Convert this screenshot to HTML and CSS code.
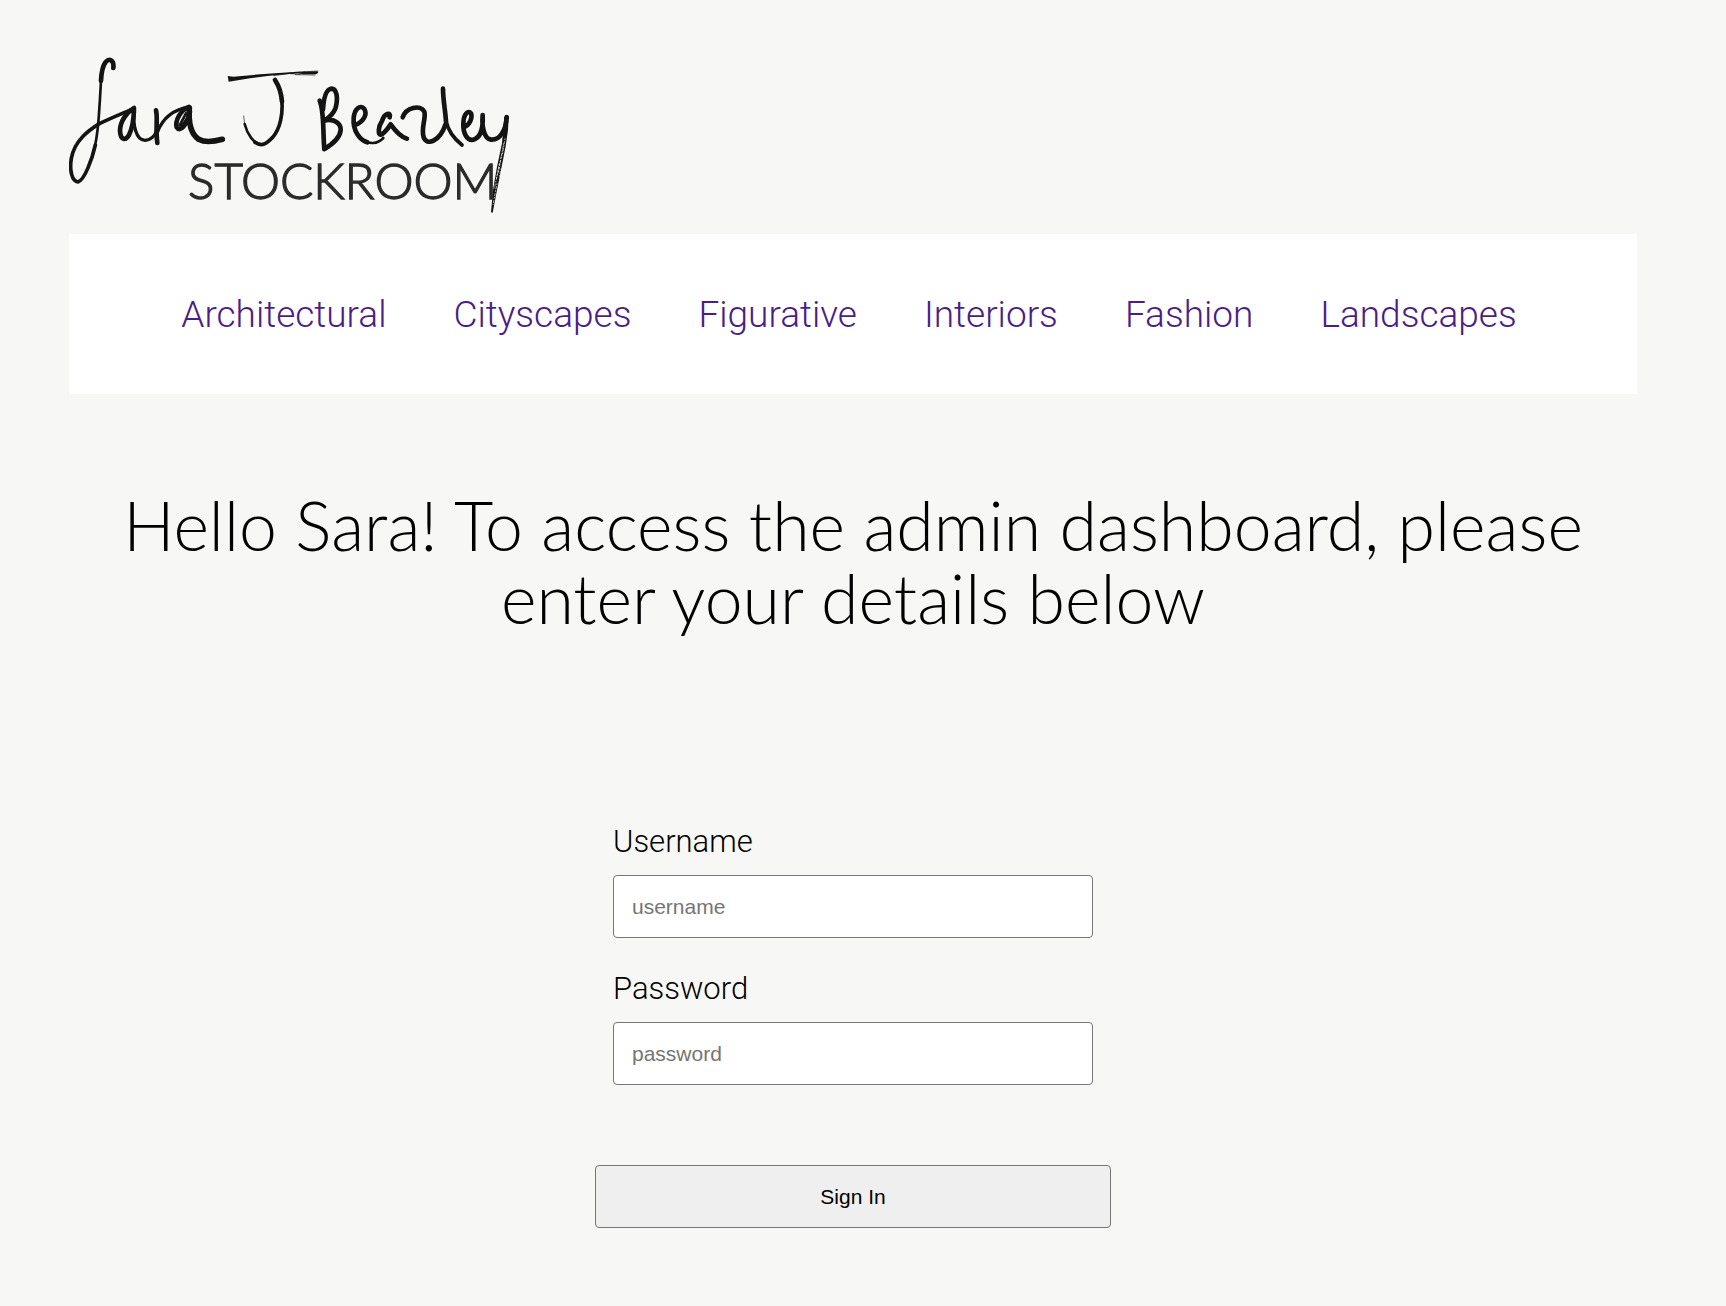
FILE: index.html
```html
<!DOCTYPE html>
<html lang="en">
<head>
<meta charset="utf-8">
<meta name="viewport" content="width=device-width, initial-scale=1">
<title>Sara J Beazley Stockroom</title>
<link rel="stylesheet" href="styles.css">
</head>
<body>
<header class="header">
  <a class="logo" href="#" aria-label="Sara J Beazley Stockroom">
    <svg class="logo-art" viewBox="27 18 1323 474" aria-hidden="true">
      <g class="ink">
        <path class="w11" d="M160 54C163 30 148 24 137 36C126 50 124 70 123 92"/>
        <path class="w6" d="M124 70C122 120 119 160 116 205C113 245 109 280 98 314"/>
        <path class="w9" d="M106 285C96 330 73 390 54 396C36 394 28 362 34 325C44 270 88 240 118 221C150 205 190 189 222 175"/>
        <path class="w11" d="M222 174C202 186 180 212 180 243C182 272 197 272 207 255C217 235 221 210 222 180"/>
        <path class="w8" d="M222 180C218 225 228 271 255 271C275 270 287 255 290 240"/>
        <path class="w11" d="M288 181C294 205 286 232 292 279"/>
        <path class="w8" d="M293 245C306 210 335 180 388 170"/>
        <path class="w11" d="M386 171C360 183 345 212 350 232C360 248 382 225 390 185"/>
        <path class="w6" d="M378 190L359 226M384 200L364 232"/>
        <path class="w14" d="M388 174C385 215 393 252 416 268C436 279 462 275 487 268"/>
        <path class="fill" d="M503 78L520 80L600 73L690 67L722 65L722 69L640 76L570 85L520 93L506 95Z"/>
        <path class="w2" d="M600 77L735 66M640 77L700 69M690 71L720 73M704 67L774 63M706 74L765 75"/>
        <path class="fill" d="M712 70L730 65L772 64L775 68L768 73L730 73Z"/>
        <path class="w12" d="M645 90C655 105 664 130 666 155"/>
        <path class="w9" d="M665 145C670 190 661 235 638 262C620 282 605 291 585 277"/>
        <path class="w6" d="M606 284C580 282 561 250 554 222"/>
        <path class="w2" d="M555 230L551 198"/>
      </g>
      <g class="ink" transform="translate(690 0)">
        <path class="w11" d="M89 152C103 185 98 240 103 297"/>
        <path class="w11" d="M99 178C101 145 108 119 123 116C140 115 145 143 137 173C130 193 118 202 104 211C133 206 153 219 152 240C150 266 125 284 103 297"/>
        <path class="w11" d="M193 226C221 216 233 193 223 177C211 162 193 176 191 205C188 243 210 270 232 277"/>
        <path class="w6" d="M215 266C237 285 263 282 280 264"/>
        <path class="w11" d="M299 202C304 184 283 190 276 213C264 231 264 252 272 254C284 250 294 235 302 223C315 241 331 261 351 266"/>
        <path class="w11" d="M338 202C348 172 391 163 403 185C409 204 392 235 401 262C410 288 449 276 467 222"/>
        <path class="w12" d="M459 116C459 150 466 180 468 215"/>
        <path class="w9" d="M468 213C475 245 492 266 516 285"/>
        <path class="w11" d="M524 231C539 224 548 204 543 190C534 178 520 194 520 222C519 250 532 274 550 269C571 263 580 235 578 195C575 230 582 266 603 269C630 271 648 240 650 201"/>
        <path class="fill" d="M643 200L656 199L654 240L647 289L635 350L620 425L608 488L603 487L609 420L621 350L636 280Z"/>
      </g>
      <g class="grain" transform="translate(690 0)">
        <path d="M641 280L625 370M636 310L613 415M645 265L637 315M628 340L619 390M621 400L609 465M634 355L628 380"/>
      </g>
      <text class="logo-word" x="384" y="446">STOCKROOM</text>
    </svg>
  </a>
</header>
<nav class="nav" aria-label="Categories">
  <a href="#">Architectural</a>
  <a href="#">Cityscapes</a>
  <a href="#">Figurative</a>
  <a href="#">Interiors</a>
  <a href="#">Fashion</a>
  <a href="#">Landscapes</a>
</nav>
<main class="main">
  <h1 class="title">Hello Sara! To access the admin dashboard, please enter your details below</h1>
  <form class="form">
    <div class="field">
      <label for="username">Username</label>
      <input id="username" name="username" type="text" placeholder="username">
    </div>
    <div class="field">
      <label for="password">Password</label>
      <input id="password" name="password" type="password" placeholder="password">
    </div>
    <button class="submit" type="submit">Sign In</button>
  </form>
</main>
</body>
</html>
```
FILE: styles.css
```css
* {
  box-sizing: border-box;
}

body {
  margin: 0;
  padding: 56px 89px 40px 69px;
  background: #f7f7f5;
  color: #000;
  font-family: Roboto, "Liberation Sans", sans-serif;
  font-weight: 300;
}

.logo {
  display: inline-block;
  vertical-align: top;
}

.logo-art {
  display: block;
  width: 441px;
  height: 158px;
}

.ink path {
  fill: none;
  stroke: #141414;
  stroke-linecap: round;
  stroke-linejoin: round;
}

.ink .fill {
  fill: #141414;
  stroke: none;
}

.ink .w2 { stroke-width: 2px; }
.ink .w6 { stroke-width: 8px; }
.ink .w8 { stroke-width: 10px; }
.ink .w9 { stroke-width: 11px; }
.ink .w11 { stroke-width: 14px; }
.ink .w12 { stroke-width: 14px; }
.ink .w14 { stroke-width: 17px; }

.grain path {
  fill: none;
  stroke: #f7f7f5;
  stroke-width: 2px;
  stroke-dasharray: 5 4 9 3;
}

.logo-word {
  fill: #2b2b2b;
  stroke: #2b2b2b;
  stroke-width: 4px;
  font-family: Lato, sans-serif;
  font-size: 148px;
  font-weight: 300;
}

.nav {
  display: flex;
  flex-wrap: wrap;
  justify-content: center;
  align-items: center;
  gap: 24px 67px;
  min-height: 160px;
  margin-top: 20px;
  padding: 24px 32px 24px 24px;
  background: #fff;
  font-size: 37px;
}

.nav a {
  color: #4b1d86;
  text-decoration: none;
}

.title {
  margin: 94px 0 0;
  padding: 0 40px;
  font-family: Lato, sans-serif;
  font-size: 68px;
  font-weight: 300;
  line-height: 73px;
  text-align: center;
}

.form {
  display: flex;
  flex-direction: column;
  max-width: 516px;
  margin: 189px auto 0;
}

.field {
  display: flex;
  flex-direction: column;
  gap: 15px;
  margin-bottom: 32px;
  padding: 0 18px;
}

.field label {
  font-size: 31px;
  line-height: 37px;
}

.field input,
.submit {
  height: 63px;
  border: 1px solid #767676;
  border-radius: 4px;
  font-family: "Liberation Sans", Arial, sans-serif;
  font-size: 21px;
}

.field input {
  width: 100%;
  padding: 0 18px;
  background: #fff;
}

.field input::placeholder {
  color: #757575;
}

.submit {
  width: 100%;
  margin-top: 48px;
  background: #efefef;
  color: #000;
}
```
